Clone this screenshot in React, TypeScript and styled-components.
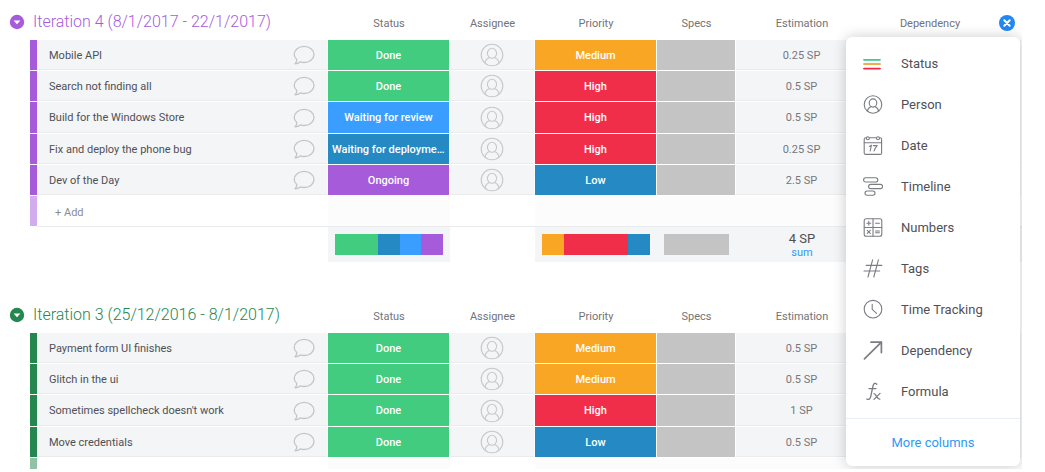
import React from 'react';
import styled, { createGlobalStyle } from 'styled-components';

const palette = {
  green: '#41cc80',
  sky: '#399eff',
  blue: '#258ac3',
  purple: '#a65bdb',
  orange: '#faa625',
  red: '#f12e49',
  gray: '#c4c4c4',
  forest: '#258750',
  cell: '#f4f5f7',
  link: '#2f98f8',
};

const GlobalStyle = createGlobalStyle`
  *, *::before, *::after { box-sizing: border-box; }
  body {
    margin: 0;
    background: #fff;
    color: #55565b;
    font-family: Roboto, "Liberation Sans", sans-serif;
    font-size: 11px;
  }
  button { font: inherit; color: inherit; background: none; border: 0; padding: 0; cursor: pointer; }
`;

const Page = styled.main`
  height: 100vh;
  padding: 0 23px 3px 0;
`;

const Board = styled.div`
  position: relative;
  height: 100%;
  overflow: hidden;
`;

const GroupTable = styled.table`
  width: 100%;
  table-layout: fixed;
  border-collapse: separate;
  border-spacing: 0;
  margin-bottom: 31px;
`;

const Column = styled.col<{ $width?: number }>`
  width: ${(p) => (p.$width ? `${p.$width}px` : 'auto')};
`;

const HeadRow = styled.tr`
  height: 40px;
`;

const TitleCell = styled.th`
  padding: 0 0 0 9px;
  text-align: left;
  font-weight: 300;
`;

const TitleBar = styled.div`
  display: flex;
  align-items: center;
  gap: 8px;
  padding-top: 4px;
`;

const IconButton = styled.button`
  display: inline-flex;
  align-items: center;
  justify-content: center;
  vertical-align: middle;
`;

const GroupTitle = styled.h2<{ $color: string }>`
  margin: 0;
  font-size: 16px;
  line-height: 20px;
  font-weight: 300;
  white-space: nowrap;
  color: ${(p) => p.$color};
`;

const HeadCell = styled.th`
  padding: 6px 0 0;
  font-weight: 400;
  color: #727378;
`;

const Row = styled.tr`
  height: 31px;

  &:nth-child(3n) {
    height: 32px;
  }
`;

const BarCell = styled.td<{ $color: string; $faded?: boolean }>`
  padding: 0;
  background: ${(p) => p.$color};
  background-clip: padding-box;
  border-left: 30px solid #fff;
  border-bottom: 1px solid #fff;
  opacity: ${(p) => (p.$faded ? 0.5 : 1)};
`;

const Cell = styled.td`
  padding: 0;
  text-align: center;
  color: #76777c;
  background: ${palette.cell};
  border-right: 1px solid #fafbfc;
  border-bottom: 1px solid #fff;
  box-shadow: inset 0 -1px #eaebed;
`;

const NameContent = styled.div`
  display: flex;
  align-items: center;
  justify-content: space-between;
  padding: 0 12px;
  color: #4f5055;
  text-align: left;
`;

const LabelCell = styled.td<{ $color: string }>`
  padding: 0 4px;
  overflow: hidden;
  text-align: center;
  text-overflow: ellipsis;
  white-space: nowrap;
  font-weight: 500;
  color: #fff;
  background: ${(p) => p.$color};
  background-clip: padding-box;
  border-right: 1px solid #fff;
  border-bottom: 1px solid #fff;
`;

const AddRow = styled.tr`
  height: 31px;
`;

const AddCell = styled.td<{ $tint?: boolean }>`
  padding: 2px 0 0 18px;
  background: ${(p) => (p.$tint ? '#fcfcfc' : '#fff')};
  border-bottom: 1px solid #eaebed;
`;

const AddButton = styled.button`
  color: #8b8c90;
`;

const SummaryRow = styled.tr`
  height: 35px;
`;

const SummaryCell = styled.td<{ $filled?: boolean }>`
  padding: 0 7px;
  text-align: center;
  background: ${(p) => (p.$filled ? palette.cell : '#fff')};
`;

const Distribution = styled.div`
  display: flex;
  height: 21px;
`;

const Segment = styled.span<{ $color: string; $share: number }>`
  flex: ${(p) => p.$share};
  background: ${(p) => p.$color};
`;

const SumValue = styled.div`
  font-size: 13px;
  line-height: 15px;
  padding-top: 2px;
  color: #4f5055;
`;

const SumLabel = styled.div`
  line-height: 14px;
  color: ${palette.link};
`;

const Menu = styled.div`
  position: absolute;
  top: 37px;
  right: 2px;
  width: 174px;
  background: #fff;
  border-radius: 6px;
  box-shadow: 0 0 14px rgba(0, 0, 0, 0.2);
`;

const MenuList = styled.ul`
  margin: 0;
  padding: 6px 0;
  list-style: none;
`;

const MenuItem = styled.button`
  display: flex;
  align-items: center;
  gap: 18px;
  width: 100%;
  height: 41px;
  padding: 0 16px;
  font-size: 13px;
  color: #505156;
  text-align: left;
`;

const MoreButton = styled.button`
  display: block;
  width: 100%;
  height: 48px;
  border-top: 1px solid #e8eef1;
  font-size: 13px;
  color: ${palette.link};
`;

const MenuIcon = styled.svg`
  flex: none;
  width: 21px;
  height: 21px;
  fill: none;
  stroke: #7b7c84;
  stroke-width: 1.1;
  stroke-linecap: round;
  stroke-linejoin: round;
`;

const CollapseIcon = ({ color }: { color: string }) => (
  <svg width="16" height="16" viewBox="0 0 16 16" aria-hidden="true">
    <circle cx="8" cy="8" r="7.2" fill={color} />
    <path d="M4.6 6.4h6.8L8 10.2z" fill="#fff" />
  </svg>
);

const CloseIcon = () => (
  <svg width="16" height="16" viewBox="0 0 16 16" aria-hidden="true">
    <circle cx="8" cy="8" r="8" fill="#2386f5" />
    <path d="M5.3 5.3l5.4 5.4M10.7 5.3l-5.4 5.4" stroke="#fff" strokeWidth="2" strokeLinecap="round" />
  </svg>
);

const CommentIcon = () => (
  <svg width="22" height="20" viewBox="0 0 22 20" fill="none" stroke="#c3c5c9" strokeWidth="1.3" strokeLinejoin="round" aria-hidden="true">
    <path d="M3.8 14.5C2.3 13.2 1.2 11.5 1.2 9.6C1.2 5 5.6 1.3 11.1 1.3S21 5 21 9.5S16.6 17.5 11.1 17.5C9.6 17.5 8.4 17.3 7.2 16.9C5.8 18 4 18.7 2.1 18.8C3.2 17.6 3.9 16.2 3.8 14.5Z" />
  </svg>
);

const AvatarIcon = () => (
  <svg width="24" height="24" viewBox="0 0 24 24" fill="none" stroke="#c6c8cb" strokeWidth="1.1" aria-hidden="true">
    <circle cx="12" cy="12" r="10.8" />
    <ellipse cx="12" cy="10.3" rx="4.6" ry="5" />
    <path d="M5 20.2C5.4 16.6 7.4 15.4 9.6 14.6M19 20.2C18.6 16.6 16.6 15.4 14.4 14.6" />
  </svg>
);

const menuItems: { label: string; icon: React.ReactNode }[] = [
  {
    label: 'Status',
    icon: (
      <g strokeWidth="1.8">
        <path d="M2 5.8h16" stroke="#3fcb86" />
        <path d="M2 10h16" stroke="#eab04e" />
        <path d="M2 14.6h16" stroke="#f5244f" />
      </g>
    ),
  },
  {
    label: 'Person',
    icon: (
      <>
        <circle cx="11" cy="9.5" r="8.8" />
        <ellipse cx="11" cy="8" rx="3.8" ry="4.1" />
        <path d="M5.4 16.2C5.8 13.4 7.3 12.4 9.1 11.6M16.6 16.2C16.2 13.4 14.7 12.4 12.9 11.6" />
      </>
    ),
  },
  {
    label: 'Date',
    icon: (
      <>
        <rect x="2.2" y="1.8" width="17.4" height="16.6" rx="1.5" />
        <path d="M2.2 6.7h17.4" />
        <circle cx="5.8" cy="2.2" r="1.5" fill="#fff" />
        <circle cx="16" cy="2.2" r="1.5" fill="#fff" />
        <path d="M7.4 10.4l2-1.2L8.2 15M11.3 9.6h3.9c-1.6 1.6-2.6 3.2-3.1 5.4" />
      </>
    ),
  },
  {
    label: 'Timeline',
    icon: (
      <>
        <rect x="1.6" y="0.8" width="14.2" height="4.2" rx="2.1" />
        <rect x="6.6" y="7.4" width="14" height="4.2" rx="2.1" />
        <rect x="3" y="14" width="10" height="4.2" rx="2.1" />
      </>
    ),
  },
  {
    label: 'Numbers',
    icon: (
      <>
        <rect x="2.2" y="0.8" width="17.6" height="17.4" rx="2" />
        <path d="M11 0.8v17.4M2.2 9.5h17.6" />
        <path d="M4.9 5.2h3.8M6.8 3.3v3.8M13.6 5.2h3.8M5.3 12.4l3 3M8.3 12.4l-3 3M13.6 13h3.8M13.6 14.8h3.8" />
      </>
    ),
  },
  {
    label: 'Tags',
    icon: <path d="M10.6 0.8L6 18M16.4 0.8L11.8 18M4.2 6.4h15.6M2 12h15.6" />,
  },
  {
    label: 'Time Tracking',
    icon: (
      <>
        <circle cx="11" cy="9.2" r="8.8" />
        <path d="M10.2 4.4v5l4.4 4" />
      </>
    ),
  },
  {
    label: 'Dependency',
    icon: <path d="M2.4 17.8L19.4 1.2M9 1.2h10.4v10.4" strokeWidth="1.7" />,
  },
  {
    label: 'Formula',
    icon: (
      <g strokeWidth="1.3">
        <path d="M14.8 2.2C13.4 0.6 11.6 1.2 11 4L8.7 14.6C8.2 17.2 6.6 18 4.8 17M7 6.6h7" />
        <path d="M12 11.6c2 0 2.6 5.6 5.8 5.6M18 11.4L12 17.4" />
      </g>
    ),
  },
];

type Label = [text: string, color: string];
interface Task {
  name: string;
  status: Label;
  priority: Label;
  estimation: string;
}
interface Group {
  title: string;
  color: string;
  columns: string[];
  tasks: Task[];
  summary?: {
    status: [string, number][];
    priority: [string, number][];
    total: string;
  };
}

const done: Label = ['Done', palette.green];
const high: Label = ['High', palette.red];
const medium: Label = ['Medium', palette.orange];
const low: Label = ['Low', palette.blue];

const baseColumns = ['Status', 'Assignee', 'Priority', 'Specs', 'Estimation'];
const columnWidths = [122, 85, 122, 79, 132, 124, 30];

const groups: Group[] = [
  {
    title: 'Iteration 4 (8/1/2017 - 22/1/2017)',
    color: palette.purple,
    columns: [...baseColumns, 'Dependency'],
    tasks: [
      { name: 'Mobile API', status: done, priority: medium, estimation: '0.25 SP' },
      { name: 'Search not finding all', status: done, priority: high, estimation: '0.5 SP' },
      { name: 'Build for the Windows Store', status: ['Waiting for review', palette.sky], priority: high, estimation: '0.5 SP' },
      { name: 'Fix and deploy the phone bug', status: ['Waiting for deployme...', palette.blue], priority: high, estimation: '0.25 SP' },
      { name: 'Dev of the Day', status: ['Ongoing', palette.purple], priority: low, estimation: '2.5 SP' },
    ],
    summary: {
      status: [[palette.green, 2], [palette.blue, 1], [palette.sky, 1], [palette.purple, 1]],
      priority: [[palette.orange, 1], [palette.red, 3], [palette.blue, 1]],
      total: '4 SP',
    },
  },
  {
    title: 'Iteration 3 (25/12/2016 - 8/1/2017)',
    color: palette.forest,
    columns: [...baseColumns, ''],
    tasks: [
      { name: 'Payment form UI finishes', status: done, priority: medium, estimation: '0.5 SP' },
      { name: 'Glitch in the ui', status: done, priority: medium, estimation: '0.5 SP' },
      { name: "Sometimes spellcheck doesn't work", status: done, priority: high, estimation: '1 SP' },
      { name: 'Move credentials', status: done, priority: low, estimation: '0.5 SP' },
    ],
  },
];

const Segments = ({ parts }: { parts: [string, number][] }) => (
  <Distribution>
    {parts.map(([color, share]) => (
      <Segment key={color} $color={color} $share={share} />
    ))}
  </Distribution>
);

const TaskGroup = ({ group, menuOpen }: { group: Group; menuOpen?: boolean }) => (
  <GroupTable>
    <colgroup>
      <Column $width={37} />
      <Column />
      {columnWidths.map((width, i) => (
        <Column key={i} $width={width} />
      ))}
    </colgroup>
    <thead>
      <HeadRow>
        <TitleCell colSpan={2}>
          <TitleBar>
            <IconButton type="button" aria-label="Collapse group">
              <CollapseIcon color={group.color} />
            </IconButton>
            <GroupTitle $color={group.color}>{group.title}</GroupTitle>
          </TitleBar>
        </TitleCell>
        {group.columns.map((name) => (
          <HeadCell key={name} scope="col">{name}</HeadCell>
        ))}
        <HeadCell>
          {menuOpen && (
            <IconButton type="button" aria-label="Close column menu">
              <CloseIcon />
            </IconButton>
          )}
        </HeadCell>
      </HeadRow>
    </thead>
    <tbody>
      {group.tasks.map((task) => (
        <Row key={task.name}>
          <BarCell $color={group.color} />
          <Cell>
            <NameContent>
              {task.name}
              <IconButton type="button" aria-label={`Comment on ${task.name}`}>
                <CommentIcon />
              </IconButton>
            </NameContent>
          </Cell>
          <LabelCell $color={task.status[1]}>{task.status[0]}</LabelCell>
          <Cell>
            <IconButton type="button" aria-label={`Assign ${task.name}`}>
              <AvatarIcon />
            </IconButton>
          </Cell>
          <LabelCell $color={task.priority[1]}>{task.priority[0]}</LabelCell>
          <LabelCell $color={palette.gray} />
          <Cell>{task.estimation}</Cell>
          <Cell />
          <Cell />
        </Row>
      ))}
      <AddRow>
        <BarCell $color={group.color} $faded />
        <AddCell>{group.summary && <AddButton type="button">+ Add</AddButton>}</AddCell>
        <AddCell $tint />
        <AddCell />
        <AddCell $tint />
        <AddCell $tint />
        <AddCell $tint />
        <AddCell $tint />
        <AddCell $tint />
      </AddRow>
    </tbody>
    {group.summary && (
      <tfoot>
        <SummaryRow>
          <SummaryCell colSpan={2} />
          <SummaryCell $filled><Segments parts={group.summary.status} /></SummaryCell>
          <SummaryCell />
          <SummaryCell $filled><Segments parts={group.summary.priority} /></SummaryCell>
          <SummaryCell $filled><Segments parts={[[palette.gray, 1]]} /></SummaryCell>
          <SummaryCell $filled>
            <SumValue>{group.summary.total}</SumValue>
            <SumLabel>sum</SumLabel>
          </SummaryCell>
          <SummaryCell $filled colSpan={2} />
        </SummaryRow>
      </tfoot>
    )}
  </GroupTable>
);

export default function App() {
  return (
    <>
      <GlobalStyle />
      <Page>
        <Board>
          {groups.map((group, i) => (
            <TaskGroup key={group.title} group={group} menuOpen={i === 0} />
          ))}
          <Menu>
            <MenuList>
              {menuItems.map((item) => (
                <li key={item.label}>
                  <MenuItem type="button">
                    <MenuIcon viewBox="0 -1 21 21" aria-hidden="true">{item.icon}</MenuIcon>
                    {item.label}
                  </MenuItem>
                </li>
              ))}
            </MenuList>
            <MoreButton type="button">More columns</MoreButton>
          </Menu>
        </Board>
      </Page>
    </>
  );
}
